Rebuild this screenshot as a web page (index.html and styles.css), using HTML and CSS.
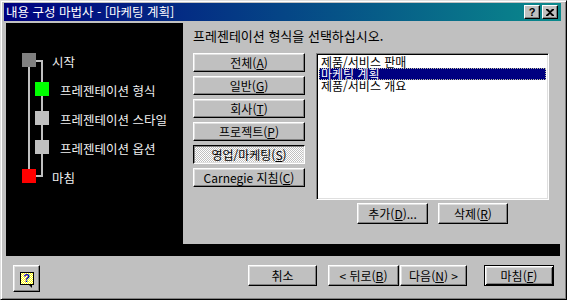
FILE: index.html
```html
<!DOCTYPE html>
<html lang="ko">
<head>
<meta charset="utf-8">
<link rel="stylesheet" href="styles.css">
</head>
<body>
<div class="window">
  <div class="titlebar">
    <span class="title">내용 구성 마법사 - [마케팅 계획]</span>
    <div class="tb-btns">
      <div class="tb-btn">?</div>
      <div class="tb-btn"><svg width="8" height="7" viewBox="0 0 8 7"><path d="M0 0h2l2 2 2-2h2v1L5 3.5 8 6v1H6L4 5 2 7H0V6l3-2.5L0 1z" fill="#000"/></svg></div>
    </div>
  </div>
  <div class="frame">
    <div class="main">
      <div class="steps">
        <svg class="tree" width="177" height="221" viewBox="0 0 177 221">
          <rect x="30" y="37" width="7" height="2" fill="#c0c0c0"/>
          <rect x="35" y="37" width="2" height="117" fill="#c0c0c0"/>
          <rect x="30" y="152" width="7" height="2" fill="#c0c0c0"/>
          <rect x="22" y="44" width="2" height="102" fill="#c0c0c0"/>
          <rect x="16" y="30" width="14" height="14" fill="#808080"/>
          <rect x="29" y="59" width="14" height="14" fill="#00ff00"/>
          <rect x="29" y="88" width="14" height="14" fill="#c0c0c0"/>
          <rect x="29" y="117" width="14" height="14" fill="#c0c0c0"/>
          <rect x="16" y="146" width="14" height="14" fill="#ff0000"/>
        </svg>
        <div class="step-list">
          <div class="step top">시작</div>
          <div class="step">프레젠테이션 형식</div>
          <div class="step">프레젠테이션 스타일</div>
          <div class="step">프레젠테이션 옵션</div>
          <div class="step top">마침</div>
        </div>
      </div>
      <div class="panel">
        <div class="prompt">프레젠테이션 형식을 선택하십시오.</div>
        <div class="content">
          <div class="cats">
            <button class="btn cat">전체(<u>A</u>)</button>
            <button class="btn cat">일반(<u>G</u>)</button>
            <button class="btn cat">회사(<u>T</u>)</button>
            <button class="btn cat">프로젝트(<u>P</u>)</button>
            <button class="btn cat pressed">영업/마케팅(<u>S</u>)</button>
            <button class="btn cat">Carnegie 지침(<u>C</u>)</button>
          </div>
          <div class="listarea">
            <div class="listbox">
              <div class="item">제품/서비스 판매</div>
              <div class="item selected">마케팅 계획</div>
              <div class="item">제품/서비스 개요</div>
            </div>
            <div class="list-btns">
              <button class="btn add">추가(<u>D</u>)...</button>
              <button class="btn del">삭제(<u>R</u>)</button>
            </div>
          </div>
        </div>
      </div>
    </div>
  </div>
  <div class="footer">
    <button class="btn help"><span class="help-icon">?</span></button>
    <button class="btn cancel">취소</button>
    <button class="btn back">&lt; 뒤로(<u>B</u>)</button>
    <button class="btn next">다음(<u>N</u>) &gt;</button>
    <button class="btn finish default">마침(<u>F</u>)</button>
  </div>
</div>
</body>
</html>
```
FILE: styles.css
```css
body {
  margin: 0;
  background: #c0c0c0;
  font-family: "Noto Sans CJK KR", "Liberation Sans", sans-serif;
}

.window {
  width: 567px;
  height: 300px;
  box-sizing: border-box;
  background: #c0c0c0;
  border: 1px solid;
  border-color: #dfdfdf #000 #000 #dfdfdf;
  box-shadow: inset 1px 1px #fff, inset -1px -1px #808080;
  padding: 2px 5px 0 3px;
  display: flex;
  flex-direction: column;
}

.titlebar {
  height: 18px;
  background: linear-gradient(90deg, #000080, #0a8a8c);
  display: flex;
  align-items: center;
  justify-content: space-between;
  padding: 0 3px 0 2px;
}

.title {
  color: #fff;
  font-size: 12.5px;
  line-height: 18px;
  white-space: nowrap;
}

.tb-btns {
  display: flex;
  gap: 2px;
}

.tb-btn {
  width: 16px;
  height: 14px;
  box-sizing: border-box;
  background: #c0c0c0;
  border: 1px solid;
  border-color: #fff #000 #000 #fff;
  box-shadow: inset -1px -1px #808080;
  font: bold 11px/12px "Liberation Sans", sans-serif;
  color: #000;
  display: flex;
  align-items: center;
  justify-content: center;
}

.frame {
  margin: 2px 1px 0 2px;
  background: #000;
  padding-bottom: 12px;
}

.main {
  display: flex;
  height: 221px;
}

.steps {
  width: 177px;
  position: relative;
}

.tree {
  position: absolute;
  left: 0;
  top: 0;
}

.step-list {
  position: relative;
  padding-top: 24px;
}

.step {
  height: 29px;
  line-height: 29px;
  font-size: 12.5px;
  color: #f0f0f0;
  padding-left: 54px;
  white-space: nowrap;
}

.step.top {
  padding-left: 46px;
}

.panel {
  flex: 1;
  background: #c0c0c0;
}

.prompt {
  padding: 6px 0 0 10px;
  font-size: 13px;
  line-height: 14px;
  color: #000;
  white-space: nowrap;
}

.content {
  display: flex;
  gap: 11px;
  margin: 10px 0 0 10px;
}

.cats {
  display: flex;
  flex-direction: column;
  gap: 4px;
  width: 112px;
}

.btn {
  background: #c0c0c0;
  border: 1px solid;
  border-color: #fff #000 #000 #fff;
  box-shadow: inset -1px -1px #808080, inset 1px 1px #dfdfdf;
  font-family: "Noto Sans CJK KR", "Liberation Sans", sans-serif;
  font-size: 12px;
  line-height: 14px;
  color: #000;
  padding: 0;
  margin: 0;
  box-sizing: border-box;
  white-space: nowrap;
}

.btn u {
  text-underline-offset: 1px;
}

.cat {
  width: 112px;
  height: 19px;
}

.btn.pressed {
  border-color: #000 #fff #fff #000;
  box-shadow: inset 1px 1px #808080, inset -1px -1px #dfdfdf;
  background: repeating-conic-gradient(#fff 0 25%, #c0c0c0 0 50%) 0 0 / 2px 2px;
}

.listarea {
  width: 233px;
}

.listbox {
  height: 147px;
  box-sizing: border-box;
  background: #fff;
  border: 1px solid;
  border-color: #808080 #fff #fff #808080;
  box-shadow: inset 1px 1px #000, inset -1px -1px #dfdfdf;
  padding: 2px 2px;
}

.item {
  height: 12px;
  line-height: 12px;
  font-size: 12px;
  color: #000;
  padding-left: 2px;
  white-space: nowrap;
}

.item.selected {
  background: #000080;
  color: #fff;
  outline: 1px dotted #c0c0a0;
  outline-offset: -1px;
}

.list-btns {
  display: flex;
  justify-content: center;
  gap: 10px;
  margin-top: 3px;
}

.add {
  width: 71px;
  height: 21px;
}

.del {
  width: 70px;
  height: 21px;
}

.footer {
  flex: 1;
  display: flex;
  align-items: flex-start;
  padding: 9px 7px 0 9px;
}

.help {
  width: 27px;
  height: 27px;
  display: flex;
  align-items: center;
  justify-content: center;
}

.help-icon {
  position: relative;
  width: 14px;
  height: 13px;
  box-sizing: border-box;
  border: 1px solid #000;
  background: repeating-conic-gradient(#ffff00 0 25%, #fff 0 50%) 0 0 / 2px 2px;
  color: #0000c0;
  font: bold 11px/11px "Liberation Sans", sans-serif;
  text-align: center;
  margin-top: -1px;
}

.help-icon::after {
  content: "";
  position: absolute;
  right: 1px;
  bottom: -4px;
  width: 0;
  height: 0;
  border-left: 3px solid transparent;
  border-top: 3px solid #000;
}

.cancel {
  margin-left: auto;
  width: 69px;
  height: 21px;
}

.back {
  margin-left: 11px;
  width: 71px;
  height: 21px;
}

.next {
  width: 67px;
  height: 21px;
  margin-left: 1px;
}

.finish {
  margin-left: 17px;
  width: 70px;
  height: 21px;
}

.btn.default {
  border: 1px solid #000;
  box-shadow: inset 1px 1px #fff, inset -1px -1px #000, inset 2px 2px #dfdfdf, inset -2px -2px #808080;
}
```
